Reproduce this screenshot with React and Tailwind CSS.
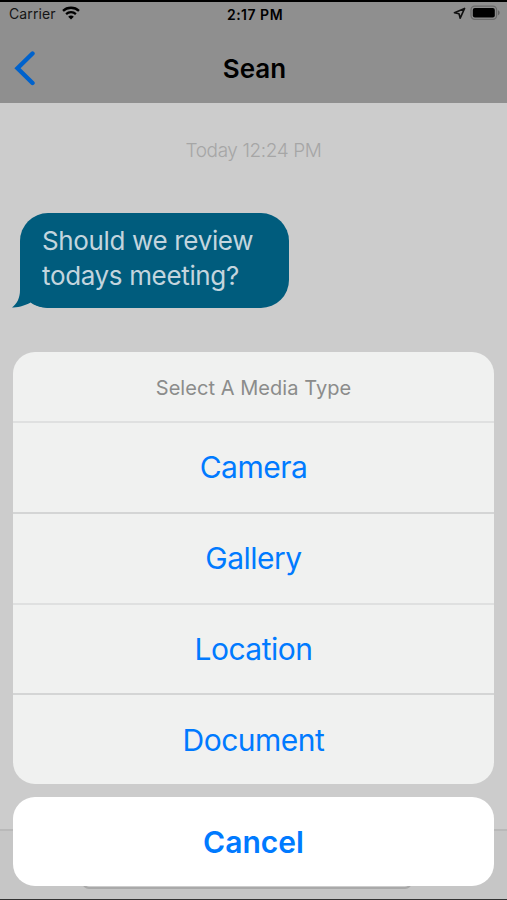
import React, { useState } from 'react';

const mediaTypes = ['Camera', 'Gallery', 'Location', 'Document'];

function WifiIcon() {
  return (
    <svg width="18" height="14" viewBox="0 0 18 14" fill="none">
      <path d="M1 4.9C5.4 0.7 12.6 0.7 17 4.9" stroke="#000" strokeWidth="2.3" />
      <path d="M4.1 8.1C6.8 5.5 11.2 5.5 13.9 8.1" stroke="#000" strokeWidth="2.2" />
      <path d="M9 13.6L6.2 10.7C7.8 9.2 10.2 9.2 11.8 10.7Z" fill="#000" />
    </svg>
  );
}

function LocationIcon() {
  return (
    <svg width="13" height="13" viewBox="0 0 13 13" fill="none" className="relative -top-px">
      <path d="M11.6 1.4L1.4 5.8L6 6.8L7.2 11.2Z" stroke="#111" strokeWidth="1.6" strokeLinejoin="round" />
    </svg>
  );
}

function BatteryIcon() {
  return (
    <svg width="31" height="16" viewBox="0 0 31 16" fill="none" className="relative -top-px">
      <rect x="1" y="1.2" width="25.6" height="13.2" rx="3.8" stroke="#6a6a6a" strokeWidth="1.3" />
      <rect x="2.8" y="3" width="22" height="9.6" rx="2" fill="#000" />
      <path d="M28 5.3C30.2 6 30.2 9.6 28 10.3Z" fill="#626262" />
    </svg>
  );
}

function Header() {
  return (
    <header className="h-[103px] bg-[#8f8f8f] border-t-2 border-black text-black">
      <div className="h-6 grid grid-cols-3 items-center pl-[9px] pr-[6px]">
        <div className="flex items-center gap-[6px] pb-[2px]">
          <span className="text-[14px] tracking-[0.1px] text-[#151515]">Carrier</span>
          <WifiIcon />
        </div>
        <span className="text-center text-[14px] font-semibold tracking-[0.5px]">2:17 PM</span>
        <div className="flex items-center justify-end gap-1">
          <LocationIcon />
          <BatteryIcon />
        </div>
      </div>
      <div className="h-[77px] grid grid-cols-3 items-center px-[14px] pt-[7px]">
        <button aria-label="Back" className="w-[22px]">
          <svg width="22" height="36" viewBox="0 0 22 36" fill="none">
            <path d="M18.5 3.5L3.5 18.2L18.5 33" stroke="#0062cc" strokeWidth="4.4" strokeLinecap="round" strokeLinejoin="miter" />
          </svg>
        </button>
        <h1 className="pl-[2px] text-center text-[26px] font-semibold">Sean</h1>
      </div>
    </header>
  );
}

function Message({ children }) {
  return (
    <div className="relative ml-[20px] w-[269px] h-[95px] rounded-[28px] bg-[#005c7d] pl-[22px] pt-[10px] text-[26px] leading-[35px] tracking-[-0.35px] text-[#c3d5de]">
      <svg className="absolute -left-[8px] bottom-0" width="40" height="36" viewBox="0 0 40 36">
        <path d="M8 0V18C8 26 5 32 0 35.400C7 35.800 14 33.200 18.500 30.600C22.500 33.500 27 35.300 36 36V0Z" fill="#005c7d" />
      </svg>
      <p className="relative whitespace-nowrap">{children}</p>
    </div>
  );
}

function ActionSheet({ onSelect }) {
  return (
    <div className="absolute left-[13px] right-[13px] bottom-[14px] text-center text-[#007aff]">
      <div className="rounded-[22px] bg-[#f0f1f0] overflow-hidden mb-[13px]">
        <div className="h-[69px] pt-[2px] flex items-center justify-center text-[20px] tracking-[0.05px] text-[#8b8c8b]">Select A Media Type</div>
        {mediaTypes.map((type) => (
          <button
            key={type}
            onClick={() => onSelect(type)}
            className="block w-full h-[90.75px] pt-px border-t-2 border-[#d8d9d9] odd:border-[#d4d5d5] even:border-[#dfe0e0] text-[30px] tracking-[-0.5px]"
          >
            {type}
          </button>
        ))}
      </div>
      <button onClick={() => onSelect('')} className="block w-full h-[89px] pt-[2px] rounded-[22px] bg-white text-[30px] font-semibold">
        Cancel
      </button>
    </div>
  );
}

export default function App() {
  const [, setMediaType] = useState('');

  return (
    <div className="relative w-[507px] h-[900px] overflow-hidden flex flex-col bg-[#cccccc] font-[Inter,sans-serif]">
      <Header />
      <main className="flex-1">
        <p className="pt-[34px] text-center text-[19px] leading-[28px] font-light tracking-[-0.4px] text-[#a6a6a6]">Today 12:24 PM</p>
        <div className="pt-[48px]">
          <Message>
            Should we review
            <br />
            todays meeting?
          </Message>
        </div>
      </main>

      {/* Message composer, mostly under the sheet */}
      <footer className="h-[71px] bg-[#c6c6c6] border-t-2 border-t-[#b9b9b9] border-b border-b-[#333] flex justify-center pt-2">
        <div className="w-[330px] h-[50px] ml-[-13px] rounded-[7px] border-2 border-[#a9a9a9] bg-[#cccccc]" />
      </footer>

      <ActionSheet onSelect={setMediaType} />
    </div>
  );
}
